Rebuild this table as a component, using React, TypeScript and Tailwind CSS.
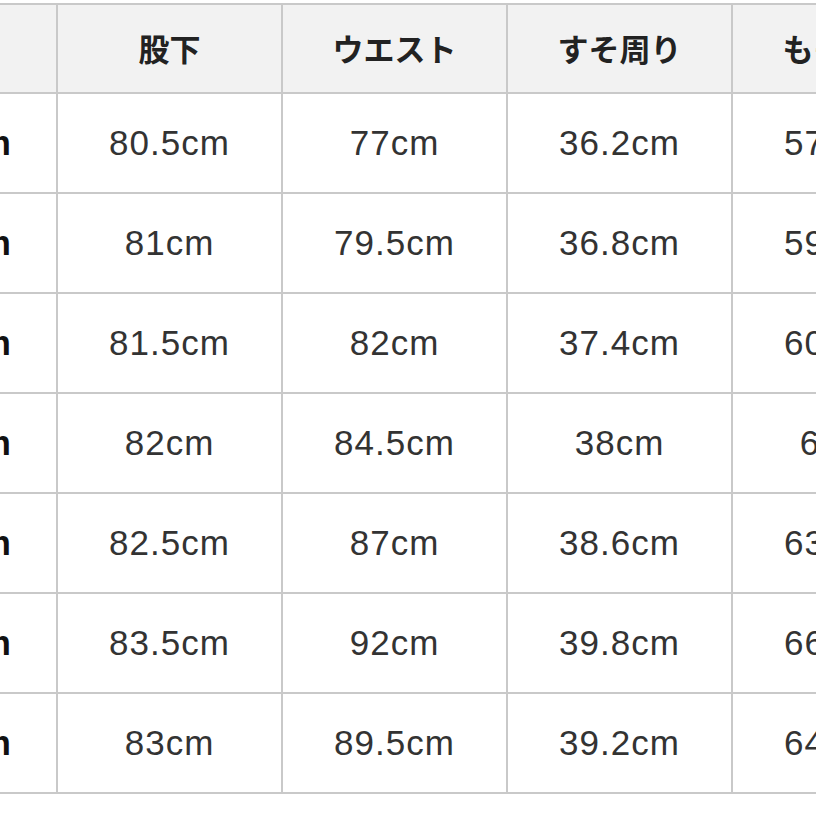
import React from 'react'

const HEADERS = ['サイズ', '股下', 'ウエスト', 'すそ周り', 'もも周り']

const ROWS: string[][] = [
  ['72.5cm', '80.5cm', '77cm', '36.2cm', '57.5cm'],
  ['74.5cm', '81cm', '79.5cm', '36.8cm', '59.5cm'],
  ['76.5cm', '81.5cm', '82cm', '37.4cm', '60.5cm'],
  ['78.5cm', '82cm', '84.5cm', '38cm', '61cm'],
  ['80.5cm', '82.5cm', '87cm', '38.6cm', '63.5cm'],
  ['84.5cm', '83.5cm', '92cm', '39.8cm', '66.5cm'],
  ['82.5cm', '83cm', '89.5cm', '39.2cm', '64.5cm'],
]

const font = "font-['Liberation_Sans','Noto_Sans_CJK_JP',sans-serif]"

const App: React.FC = () => {
  return (
    <div className={`w-[816px] h-[816px] overflow-hidden bg-white ${font}`}>
      <div className="mt-[3px] ml-[-167px] w-[1125px] border-t-2 border-[#c9c9c9]">
        {/* header */}
        <div className="flex">
          {HEADERS.map((h) => (
            <div
              key={h}
              className="w-[225px] h-[89px] shrink-0 flex items-center justify-center bg-[#f2f2f2] border-r-2 border-b-2 border-[#c9c9c9] text-[31px] font-bold text-[#222] font-['Noto_Sans_CJK_JP',sans-serif]"
            >
              {h}
            </div>
          ))}
        </div>
        {/* body */}
        {ROWS.map((row, i) => (
          <div key={i} className="flex">
            {row.map((v, j) => (
              <div
                key={j}
                className={`w-[225px] h-[100px] shrink-0 flex items-center justify-center border-r-2 border-b-2 border-[#c9c9c9] text-[35px] tracking-[1px] ${
                  j === 0 ? 'font-bold text-[#111] pl-[10px]' : 'text-[#333]'
                }`}
              >
                {v}
              </div>
            ))}
          </div>
        ))}
      </div>
    </div>
  )
}

export default App
